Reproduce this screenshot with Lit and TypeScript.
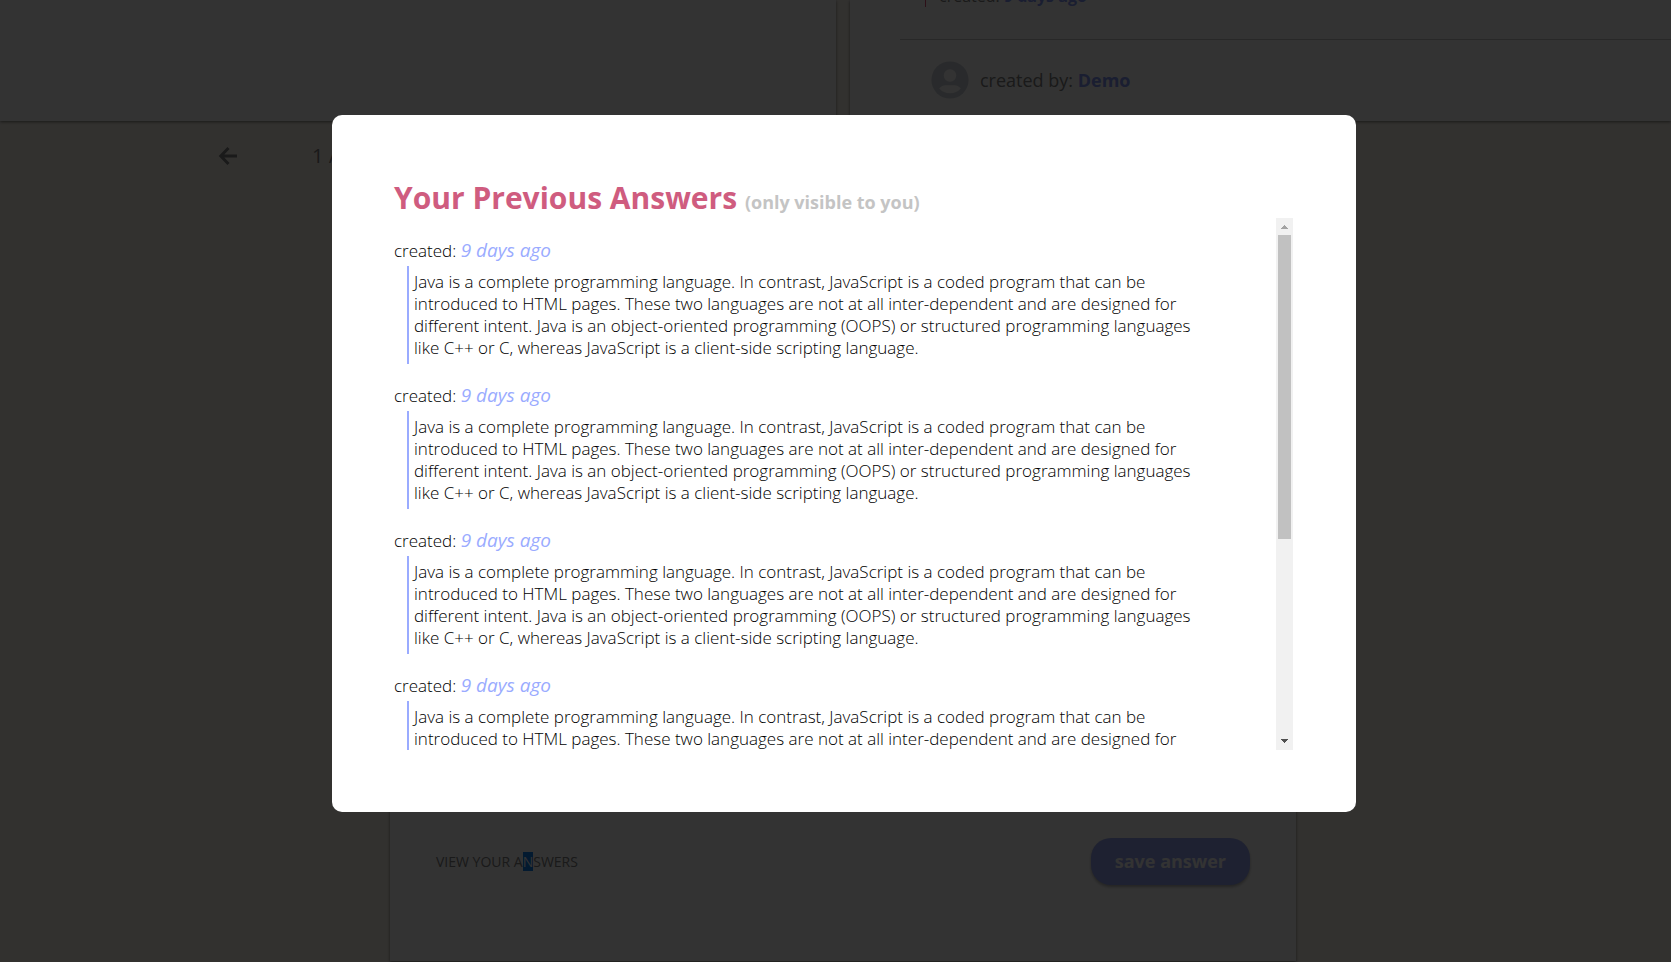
import { LitElement, html, css } from "lit";
import { customElement, state } from "lit/decorators.js";

const ANSWER =
  "Java is a complete programming language. In contrast, JavaScript is a coded program that can be introduced to HTML pages. These two languages are not at all inter-dependent and are designed for different intent. Java is an object-oriented programming (OOPS) or structured programming languages like C++ or C, whereas JavaScript is a client-side scripting language.";

const answers = Array.from({ length: 6 }, () => ({ created: "9 days ago", text: ANSWER }));

@customElement("answers-dialog")
class AnswersDialog extends LitElement {
  static styles = css`
    :host {
      display: block;
      width: min(1024px, 100%);
      box-sizing: border-box;
      background: #fff;
      border-radius: 10px;
      padding: 62px 63px 62px 62px;
      color: #000;
    }
    .title {
      margin: 0;
      font-size: 30px;
      line-height: 41px;
      font-weight: 700;
      color: #cf5c7f;
    }
    .note {
      font-size: 18px;
      line-height: 1;
      color: #c4c4c4;
    }
    .body {
      display: flex;
      height: 532px;
    }
    .list {
      flex: 1;
      margin: 0;
      padding: 1px 77px 0 0;
      list-style: none;
      overflow-y: auto;
      scrollbar-width: none;
    }
    .item {
      padding-top: 19px;
    }
    .created {
      font-size: 17px;
      line-height: 26px;
      font-weight: 300;
      margin: 0;
      padding-bottom: 2px;
    }
    .when {
      font-size: 19px;
      line-height: 1;
      font-weight: 400;
      color: #9aabff;
    }
    .text {
      margin: 0 0 0 13px;
      padding: 5px;
      border-left: 2px solid #9aabff;
      font-size: 17px;
      line-height: 22px;
      font-weight: 300;
    }
    .scroll {
      display: flex;
      flex-direction: column;
      width: 17px;
      background: #f1f1f1;
    }
    .step {
      width: 17px;
      height: 17px;
      padding: 0;
      border: 0;
      background: none;
      display: block;
    }
    .step svg {
      display: block;
    }
    .track {
      flex: 1;
      padding: 0 2px;
    }
    .thumb {
      background: #c1c1c1;
    }
  `;

  @state() private offset = 0;
  @state() private size = 61;

  firstUpdated() {
    this.measure();
  }

  private get list() {
    return this.renderRoot.querySelector(".list") as HTMLElement;
  }

  private measure() {
    const el = this.list;
    this.size = (100 * el.clientHeight) / el.scrollHeight;
    this.offset = (el.scrollTop / el.scrollHeight) * (el.clientHeight - 34);
  }

  private step(by: number) {
    this.list.scrollBy({ top: by });
  }

  render() {
    return html`
      <h2 class="title">Your Previous Answers <span class="note">(only visible to you)</span></h2>
      <div class="body">
        <ul class="list" @scroll=${this.measure}>
          ${answers.map(
            (a) => html`<li class="item">
              <p class="created">created: <em class="when">${a.created}</em></p>
              <p class="text">${a.text}</p>
            </li>`
          )}
        </ul>
        <div class="scroll">
          <button class="step" aria-label="Scroll up" @click=${() => this.step(-40)}>
            <svg width="17" height="17" shape-rendering="crispEdges"><path d="M5 11h7v-1h-1v-1h-1v-1h-1v-1h-1v1h-1v1h-1v1h-1z" fill="#a3a3a3" /></svg>
          </button>
          <div class="track">
            <div class="thumb" style="height:${this.size}%;transform:translateY(${this.offset}px)"></div>
          </div>
          <button class="step" aria-label="Scroll down" @click=${() => this.step(40)}>
            <svg width="17" height="17" shape-rendering="crispEdges"><path d="M5 6h7v1h-1v1h-1v1h-1v1h-1v-1h-1v-1h-1v-1h-1z" fill="#505050" /></svg>
          </button>
        </div>
      </div>
    `;
  }
}

@customElement("app-root")
class AppRoot extends LitElement {
  static styles = css`
    :host {
      display: block;
      position: relative;
      height: 100vh;
      overflow: hidden;
      font-family: "Open Sans", "Noto Sans", sans-serif;
      color: #808080;
      background: #faf5ec;
    }
    .page {
      display: flex;
      flex-direction: column;
      height: 100%;
    }
    .top {
      display: grid;
      grid-template-columns: 836fr 821fr;
      gap: 14px;
      height: 121px;
    }
    .panel {
      background: #fff;
      box-shadow: 0 1px 3px rgba(0, 0, 0, 0.5);
    }
    .details {
      display: flex;
      flex-direction: column;
      padding-left: 50px;
    }
    .posted {
      height: 40px;
      padding-left: 25px;
      box-sizing: border-box;
      border-bottom: 1px solid #c8c8c8;
      display: flex;
      align-items: flex-start;
    }
    .quote {
      height: 7px;
      display: flex;
      align-items: flex-end;
      border-left: 1px solid #e0527a;
      padding-left: 13px;
      font-size: 16px;
      line-height: 22px;
      white-space: pre;
    }
    .author {
      display: flex;
      align-items: center;
      gap: 11px;
      padding: 21px 0 0 31px;
      font-size: 18px;
      line-height: 25px;
    }
    .name {
      color: #8294f5;
      font-weight: 700;
      text-decoration: none;
    }
    .pager {
      display: flex;
      align-items: center;
      gap: 74px;
      padding: 20px 0 0 218px;
      font-size: 20px;
      line-height: 30px;
    }
    .back {
      border: 0;
      padding: 0;
      background: none;
      color: #808080;
    }
    .back svg {
      display: block;
    }
    .editor {
      flex: 1;
      width: 906px;
      margin: 60px 375px 1px auto;
      padding: 0 46px 76px;
      box-sizing: border-box;
      display: flex;
      align-items: flex-end;
      justify-content: space-between;
      background: #fff;
      box-shadow: 0 1px 3px rgba(0, 0, 0, 0.5);
    }
    .view {
      border: 0;
      padding: 0;
      margin-bottom: 13px;
      background: none;
      font-family: inherit;
      font-size: 14px;
      line-height: 20px;
      color: #808080;
    }
    .picked {
      background: #1080f0;
      color: #fff;
    }
    .save {
      border: 0;
      border-radius: 20px;
      padding: 11px 24px;
      font-family: inherit;
      font-size: 18px;
      line-height: 25px;
      font-weight: 700;
      color: #fff;
      background: #96a5f2;
      box-shadow: 0 2px 3px rgba(0, 0, 0, 0.3);
    }
    .overlay {
      position: absolute;
      inset: 0;
      display: flex;
      align-items: center;
      justify-content: center;
      padding: 0 0 35px 17px;
      background: rgba(0, 0, 0, 0.8);
    }
  `;

  render() {
    return html`
      <main class="page">
        <div class="top">
          <section class="panel"></section>
          <section class="panel details">
            <div class="posted">
              <div class="quote">created: <b class="name">9 days ago</b></div>
            </div>
            <div class="author">
              <svg width="38" height="38" viewBox="0 0 38 38">
                <circle cx="19" cy="19" r="18.6" fill="#cdd3db" />
                <circle cx="19" cy="14.5" r="6.2" fill="#fff" />
                <path d="M8.2 27.5c2-2.6 4.300-3.300 6-3.300h9.600c1.700 0 4 .7 6 3.300a14.500 14.500 0 0 1-21.600 0z" fill="#fff" />
              </svg>
              <span>created by: <a class="name" href="#">Demo</a></span>
            </div>
          </section>
        </div>
        <nav class="pager">
          <button class="back" aria-label="Previous">
            <svg width="20" height="20" viewBox="0 0 20 20" fill="none" stroke="currentColor" stroke-width="3">
              <path d="M10.500 2 2.800 10l7.700 8M3 10h16" />
            </svg>
          </button>
          <span>1 / 1</span>
        </nav>
        <section class="editor">
          <button class="view">VIEW YOUR A<span class="picked">N</span>SWERS</button>
          <button class="save">save answer</button>
        </section>
      </main>
      <div class="overlay">
        <answers-dialog role="dialog" aria-modal="true"></answers-dialog>
      </div>
    `;
  }
}
